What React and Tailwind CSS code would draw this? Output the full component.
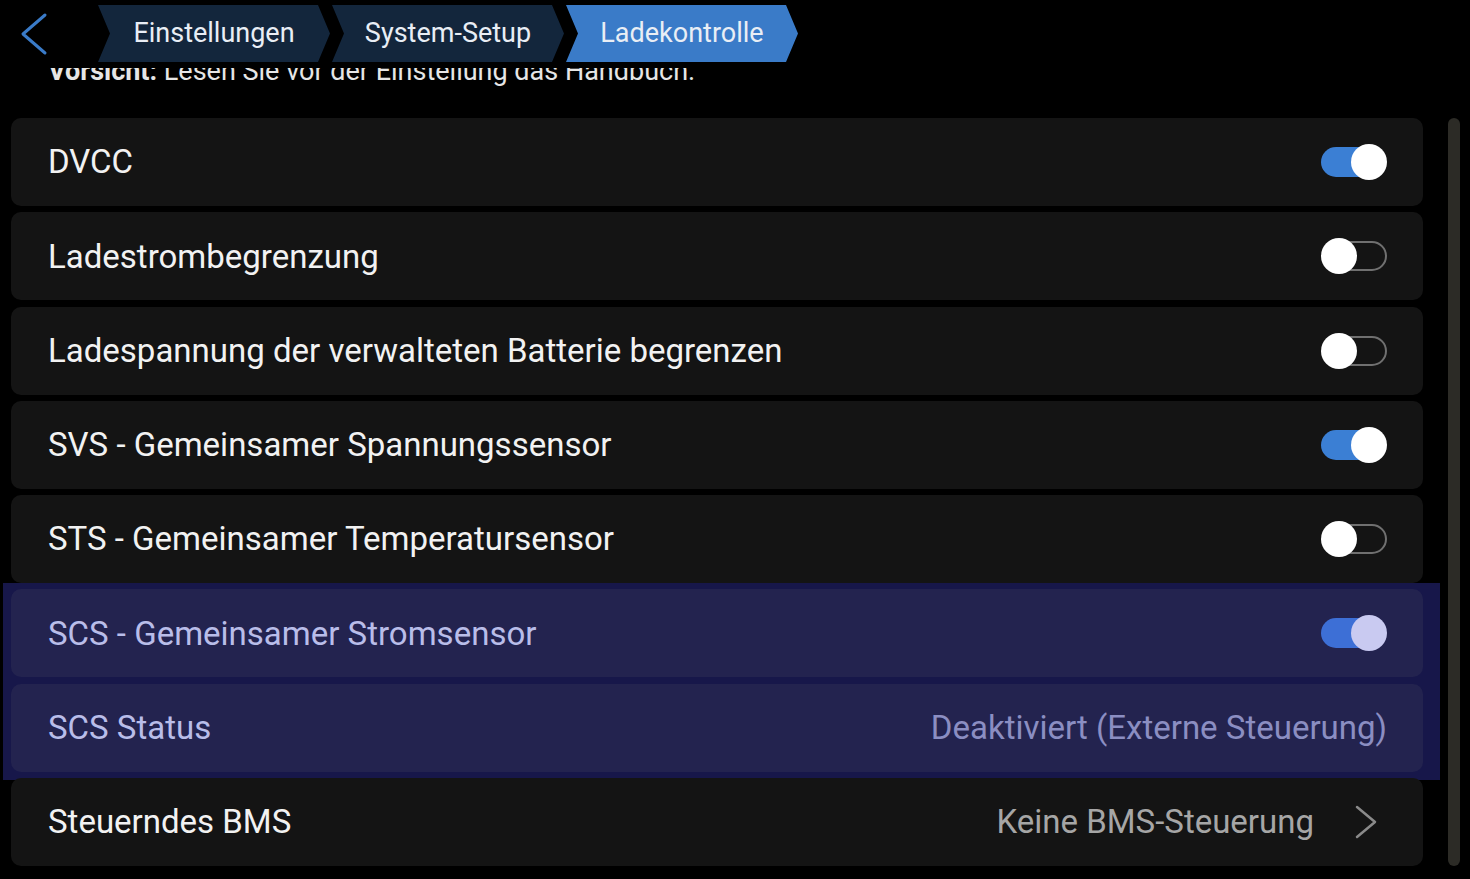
import React from 'react';

const rows = [
  { label: 'DVCC', toggle: true },
  { label: 'Ladestrombegrenzung', toggle: false },
  { label: 'Ladespannung der verwalteten Batterie begrenzen', toggle: false },
  { label: 'SVS - Gemeinsamer Spannungssensor', toggle: true },
  { label: 'STS - Gemeinsamer Temperatursensor', toggle: false },
];

function Toggle({ on, focused }) {
  return (
    <div className="relative w-[66px] h-[36px] shrink-0">
      {on ? (
        <div className={`absolute left-0 right-[6px] top-[3px] bottom-[3px] rounded-full ${focused ? 'bg-[#3d6fd6]' : 'bg-[#3b7fd4]'}`} />
      ) : (
        <div className="absolute left-[2px] right-0 top-[3px] bottom-[3px] rounded-full border-[2.5px] border-[#707070]" />
      )}
      <div
        className={`absolute top-0 w-[36px] h-[36px] rounded-full ${on ? 'right-0' : 'left-0'} ${focused ? 'bg-[#c9caf1]' : 'bg-white'}`}
      />
    </div>
  );
}

function Row({ children, focused }) {
  return (
    <div
      className={`h-[88px] rounded-[10px] flex items-center justify-between pl-[37px] pr-[36px] ${focused ? 'bg-[#23234f]' : 'bg-[#141414]'}`}
    >
      {children}
    </div>
  );
}

function Tab({ label, active }) {
  return (
    <div
      className={`w-[232px] h-[57px] flex items-center justify-center text-[27px] text-[#e9eef5] [clip-path:polygon(0_0,calc(100%-12px)_0,100%_50%,calc(100%-12px)_100%,0_100%,12px_50%)] ${active ? 'bg-[#3a7bc8]' : 'bg-[#13263c]'}`}
    >
      {label}
    </div>
  );
}

export default function App() {
  return (
    <div className="w-[1470px] h-[879px] bg-black overflow-hidden font-['Roboto',sans-serif] text-[#f2f2f2]">
      {/* Header */}
      <div className="h-[68px] flex items-start pt-[5px] pl-[20px] relative z-10 bg-black">
        <div className="w-[78px] h-[57px] flex items-center">
          <svg width="30" height="44" viewBox="0 0 30 44" fill="none">
            <polyline points="25,3 3,22 25,41" stroke="#3a7bc8" strokeWidth="3" strokeLinecap="round" strokeLinejoin="round" />
          </svg>
        </div>
        <div className="flex gap-[2px]">
          <Tab label="Einstellungen" />
          <Tab label="System-Setup" />
          <Tab label="Ladekontrolle" active />
        </div>
      </div>

      {/* Warning text, scrolled under the header */}
      <div className="h-[20px] overflow-hidden pl-[48px]">
        <p className="-mt-[10px] text-[27px] leading-[27px] text-[#e6e6e6] whitespace-nowrap">
          <span className="font-bold">Vorsicht:</span> Lesen Sie vor der Einstellung das Handbuch.
        </p>
      </div>

      {/* List */}
      <div className="flex mt-[30px] pl-[11px]">
        <div className="w-[1412px] flex flex-col gap-[6.3px]">
          {rows.map((r) => (
            <Row key={r.label}>
              <span className="text-[33px]">{r.label}</span>
              <Toggle on={r.toggle} />
            </Row>
          ))}

          <div className="-mt-[6px] -ml-[8px] -mr-[17px] pl-[8px] pr-[17px] pt-[6px] pb-[8px] bg-[#17174a] flex flex-col gap-[6.3px]">
            <Row focused>
              <span className="text-[33px] text-[#b9bde9]">SCS - Gemeinsamer Stromsensor</span>
              <Toggle on focused />
            </Row>
            <Row focused>
              <span className="text-[33px] text-[#b9bde9]">SCS Status</span>
              <span className="text-[33px] text-[#8b8ec2]">Deaktiviert (Externe Steuerung)</span>
            </Row>
          </div>

          <div className="-mt-[8.3px] relative">
            <div className="h-[88px] rounded-[10px] flex items-center justify-between pl-[37px] pr-[45px] bg-[#141414]">
              <span className="text-[33px]">Steuerndes BMS</span>
              <div className="flex items-center gap-[40px]">
                <span className="text-[33px] text-[#a6a6a6]">Keine BMS-Steuerung</span>
                <svg width="24" height="34" viewBox="0 0 24 34" fill="none">
                  <polyline points="3,2 21,17 3,32" stroke="#8a8a8a" strokeWidth="2.5" strokeLinecap="round" strokeLinejoin="round" />
                </svg>
              </div>
            </div>
          </div>
        </div>
        <div className="ml-[25px] w-[12px] h-[748px] rounded-full bg-[#2c2b26]" />
      </div>
    </div>
  );
}
